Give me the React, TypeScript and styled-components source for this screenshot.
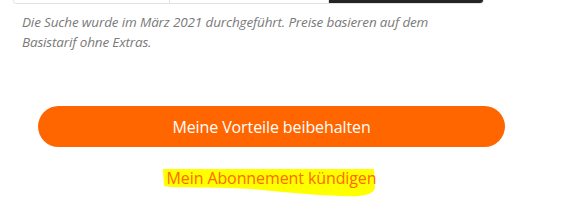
import React from "react";
import styled, { createGlobalStyle } from "styled-components";

const GlobalStyle = createGlobalStyle`
  html, body {
    margin: 0;
    padding: 0;
    background: #fff;
  }
  body {
    font-family: "Open Sans", "Noto Sans", sans-serif;
  }
`;

const Page = styled.div`
  width: 572px;
  height: 211px;
  overflow: hidden;
  background: #fff;
`;

const TableTail = styled.div`
  display: grid;
  grid-template-columns: 155px 159px 157px;
  width: 471px;
  height: 4px;
  margin-left: 13px;
  border: 1px solid #e2e2e2;
  border-top: none;
  border-radius: 0 0 8px 8px;
  overflow: hidden;
  box-sizing: border-box;
`;

const Cell = styled.div<{ $dark?: boolean; $first?: boolean }>`
  background: ${(p) => (p.$dark ? "#242424" : "#fff")};
  border-left: ${(p) => (p.$first ? "none" : "1px solid #e2e2e2")};
`;

const Note = styled.p`
  margin: 8px 0 0 22px;
  font-size: 13.5px;
  line-height: 20px;
  font-style: italic;
  color: #7a7a7a;
  letter-spacing: -0.15px;
`;

const Actions = styled.div`
  width: 543px;
  display: flex;
  flex-direction: column;
  align-items: center;
  margin-top: 54px;
`;

const KeepButton = styled.button`
  width: 467px;
  height: 41px;
  border: none;
  border-radius: 21px;
  background: #ff6600;
  color: #fff;
  font-family: "Open Sans", "Noto Sans", sans-serif;
  font-size: 16px;
  letter-spacing: -0.1px;
  cursor: pointer;
`;

const CancelWrap = styled.span`
  position: relative;
  display: inline-block;
  margin-top: 20px;
  padding: 0 3px;
`;

const Marker = styled.svg`
  position: absolute;
  left: -2px;
  top: 1px;
  width: 214px;
  height: 29px;
  z-index: 0;
`;

const CancelLink = styled.a`
  position: relative;
  z-index: 1;
  font-size: 16px;
  line-height: 21px;
  color: #ff6a00;
  text-decoration: none;
  letter-spacing: -0.1px;
`;

export default function App() {
  return (
    <Page>
      <GlobalStyle />
      <TableTail>
        <Cell $first />
        <Cell />
        <Cell $dark />
      </TableTail>
      <Note>
        Die Suche wurde im März 2021 durchgeführt. Preise basieren auf dem
        <br />
        Basistarif ohne Extras.
      </Note>
      <Actions>
        <KeepButton>Meine Vorteile beibehalten</KeepButton>
        <CancelWrap>
          <Marker viewBox="0 0 214 29" preserveAspectRatio="none">
            <path
              d="M1 1 L212 1 L213 20 C211 27 200 29 180 28 C150 27 120 24 90 21 C60 19 30 20 8 19 L2 18 Z"
              fill="#ffff00"
            />
          </Marker>
          <CancelLink href="#">Mein Abonnement kündigen</CancelLink>
        </CancelWrap>
      </Actions>
    </Page>
  );
}
